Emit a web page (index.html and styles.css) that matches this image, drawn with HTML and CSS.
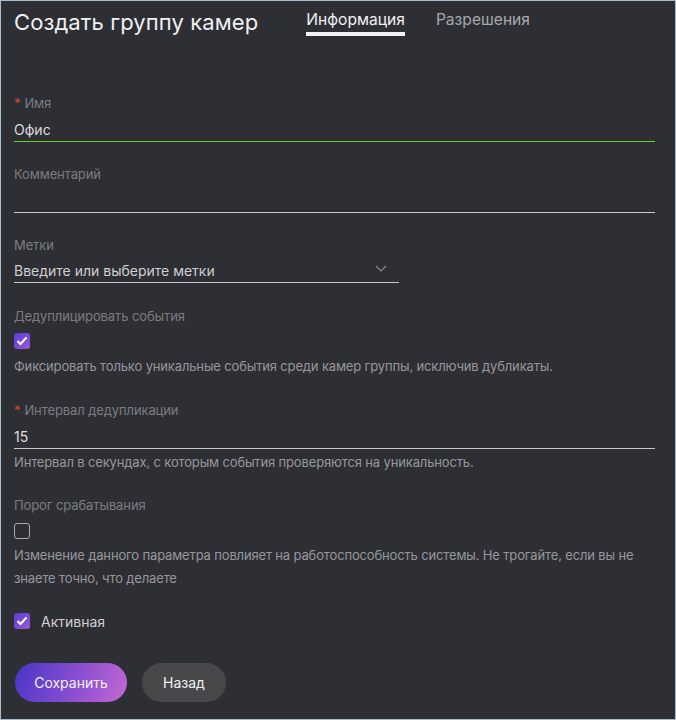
FILE: index.html
```html
<!DOCTYPE html>
<html lang="ru">
<head>
<meta charset="utf-8">
<link rel="stylesheet" href="styles.css">
</head>
<body>
<div class="page">
  <header class="header">
    <h1 class="title">Создать группу камер</h1>
    <nav class="tabs">
      <span class="tab tab-active">Информация</span>
      <span class="tab">Разрешения</span>
    </nav>
  </header>

  <form class="form">
    <div class="field f-name">
      <div class="label"><span class="req">*</span>Имя</div>
      <div class="input input-ok">Офис</div>
    </div>

    <div class="field">
      <div class="label">Комментарий</div>
      <div class="input input-empty"></div>
    </div>

    <div class="field">
      <div class="label">Метки</div>
      <div class="input select">
        <span class="placeholder">Введите или выберите метки</span>
        <svg class="chev" width="12" height="7" viewBox="0 0 12 7"><path d="M1 1l5 5 5-5" fill="none" stroke="#8a8b8f" stroke-width="1.2"/></svg>
      </div>
    </div>

    <div class="field f-dedup">
      <div class="label">Дедуплицировать события</div>
      <div class="check-row">
        <span class="cb cb-on"><svg width="12" height="10" viewBox="0 0 12 10"><path d="M1.5 5l3 3 6-6.5" fill="none" stroke="#fff" stroke-width="2"/></svg></span>
      </div>
      <div class="help">Фиксировать только уникальные события среди камер группы, исключив дубликаты.</div>
    </div>

    <div class="field f-interval">
      <div class="label"><span class="req">*</span>Интервал дедупликации</div>
      <div class="input input-num">15</div>
      <div class="help help-tight">Интервал в секундах, с которым события проверяются на уникальность.</div>
    </div>

    <div class="field f-threshold">
      <div class="label">Порог срабатывания</div>
      <div class="check-row check-row-2">
        <span class="cb cb-off"></span>
      </div>
      <div class="help help-multi">Изменение данного параметра повлияет на работоспособность системы. Не трогайте, если вы не знаете точно, что делаете</div>
    </div>

    <label class="active-row">
      <span class="cb cb-on"><svg width="12" height="10" viewBox="0 0 12 10"><path d="M1.5 5l3 3 6-6.5" fill="none" stroke="#fff" stroke-width="2"/></svg></span>
      <span class="active-label">Активная</span>
    </label>

    <div class="buttons">
      <button type="button" class="btn btn-primary">Сохранить</button>
      <button type="button" class="btn btn-secondary">Назад</button>
    </div>
  </form>
</div>
</body>
</html>
```

FILE: styles.css
```css
* { box-sizing: border-box; }
html, body { margin: 0; padding: 0; }
body {
  background: #2e2f35;
  font-family: Inter, "Noto Sans", sans-serif;
}
.page {
  width: 676px;
  height: 720px;
  border: 1px solid #a9bccb;
  background: #2e2f35;
  padding: 0 0 0 13px;
  overflow: hidden;
}
.header {
  display: flex;
  align-items: flex-start;
  height: 60px;
}
.title {
  margin: 8px 0 0 0;
  font-size: 22px;
  line-height: 26px;
  font-weight: 400;
  color: #f0f0f2;
  letter-spacing: 0.1px;
}
.tabs {
  display: flex;
  gap: 31px;
  margin: 9px 0 0 48px;
}
.tab {
  font-size: 15.6px;
  line-height: 20px;
  color: #a7a8ac;
  padding-bottom: 2px;
}
.tab-active {
  color: #f2f2f4;
  border-bottom: 4px solid #f2f2f4;
}
.form {
  width: 641px;
}
.field { margin-top: 22px; }
.f-name { margin-top: 32px; }
.label {
  font-size: 13px;
  line-height: 20px;
  color: #7b7c81;
  letter-spacing: -0.1px;
}
.req {
  color: #d4452b;
  margin-right: 4px;
}
.input {
  padding-top: 7px;
  font-size: 14px;
  line-height: 20px;
  color: #dcdcdf;
  font-weight: 400;
  border-bottom: 1px solid #c9c9cc;
  height: 29px;
}
.input-ok { border-bottom-color: #6bd11e; }
.select {
  width: 385px;
  height: 28px;
  display: flex;
  justify-content: space-between;
  align-items: flex-start;
  padding-top: 6px;
  padding-right: 12px;
}
.placeholder { color: #cfcfd2; line-height: 20px; }
.chev { margin-top: 4px; }
.f-dedup { margin-top: 23px; }
.check-row {
  padding-top: 7px;
  height: 29px;
}
.check-row-2 { padding-top: 8px; }
.cb {
  display: flex;
  align-items: center;
  justify-content: center;
  width: 16px;
  height: 16px;
  border-radius: 3px;
}
.cb-on {
  background: linear-gradient(135deg, #5a3bd8 0%, #9a5ad6 100%);
}
.cb-off {
  border: 1.5px solid #a8a9ad;
}
.help {
  font-size: 13px;
  line-height: 22px;
  color: #96979b;
  letter-spacing: -0.15px;
}
.help-tight { line-height: 20px; margin-top: 3px; }
.help-multi { line-height: 23px; }
.f-interval { margin-top: 23px; }
.f-threshold { margin-top: 23px; }
.active-row {
  display: flex;
  align-items: center;
  gap: 11px;
  margin-top: 22px;
  height: 18px;
}
.active-label {
  font-size: 14px;
  color: #d0d0d3;
}
.buttons {
  display: flex;
  gap: 15px;
  margin-top: 33px;
  padding-left: 1px;
}
.btn {
  border: none;
  height: 39px;
  border-radius: 20px;
  font-family: Inter, "Noto Sans", sans-serif;
  font-size: 14px;
  color: #f2f2f4;
  cursor: pointer;
}
.btn-primary {
  width: 112px;
  background: linear-gradient(110deg, #4a34c6 0%, #8a4fd0 55%, #c468d4 100%);
}
.btn-secondary {
  width: 84px;
  background: #48484b;
}
```
